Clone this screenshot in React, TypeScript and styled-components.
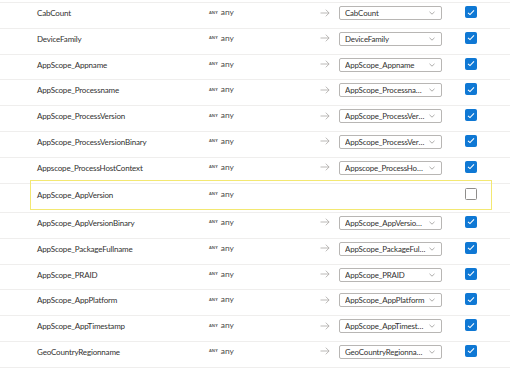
import React from 'react';
import styled, { createGlobalStyle } from 'styled-components';

interface FieldMapping {
  name: string;
  type: string;
  target: string | null;
  selected: boolean;
  focused?: boolean;
}

const GlobalStyle = createGlobalStyle`
  html, body {
    margin: 0;
    padding: 0;
    background: #ffffff;
  }
  body {
    font-family: Lato, "Noto Sans", sans-serif;
    -webkit-font-smoothing: antialiased;
  }
`;

const Page = styled.div`
  padding-top: 2px;
  width: 523px;
  height: 369px;
  overflow: hidden;
  box-sizing: border-box;
`;

const Table = styled.div`
  width: 510px;
  border-top: 1px solid #efeeed;
`;

const Row = styled.div<{ $tall?: boolean }>`
  display: flex;
  align-items: flex-start;
  height: ${p => (p.$tall ? '28.4px' : '24.8px')};
  border-bottom: 1px solid #efeeed;
`;

const RowInner = styled.div<{ $focused?: boolean }>`
  display: flex;
  align-items: center;
  box-sizing: border-box;
  margin-left: 30px;
  width: 462px;
  height: ${p => (p.$focused ? '30px' : '20px')};
  margin-top: ${p => (p.$focused ? '-4px' : '0')};
  border: ${p => (p.$focused ? '1px solid #f3e872' : 'none')};
  padding-left: ${p => (p.$focused ? '6px' : '7px')};
`;

const NameCell = styled.div`
  width: 172px;
  flex-shrink: 0;
  font-size: 8px;
  letter-spacing: -0.17px;
  color: #323130;
  white-space: nowrap;
`;

const TypeCell = styled.div`
  width: 111px;
  flex-shrink: 0;
  display: flex;
  align-items: center;
  gap: 3px;
  margin-top: -2px;
`;

const TypeBadge = styled.span`
  font-family: "Noto Sans", sans-serif;
  font-size: 4px;
  font-weight: 700;
  color: #605e5c;
  letter-spacing: 0.1px;
`;

const TypeText = styled.span`
  font-size: 8.4px;
  color: #4a4948;
`;

const ArrowCell = styled.div`
  width: 19px;
  flex-shrink: 0;
  display: flex;
  align-items: center;
  margin-top: -1px;
`;

const Dropdown = styled.div`
  width: 103px;
  height: 14px;
  flex-shrink: 0;
  box-sizing: border-box;
  border: 1px solid #b8b6b4;
  border-radius: 2px;
  display: flex;
  align-items: center;
  padding: 0 6px 0 5px;
  gap: 3px;
  background: #fff;
`;

const DropdownText = styled.span`
  flex: 1;
  min-width: 0;
  font-size: 7.9px;
  letter-spacing: -0.16px;
  color: #323130;
  white-space: nowrap;
  overflow: hidden;
  text-overflow: ellipsis;
`;

const DropdownSpacer = styled.div`
  width: 103px;
  flex-shrink: 0;
`;

const CheckCell = styled.div`
  margin-left: 23px;
  display: flex;
  align-items: center;
  margin-bottom: 2px;
`;

const Checkbox = styled.div<{ $checked: boolean }>`
  width: 12px;
  height: 12px;
  box-sizing: border-box;
  border-radius: 1.5px;
  display: flex;
  align-items: center;
  justify-content: center;
  background: ${p => (p.$checked ? '#0f78d4' : '#ffffff')};
  border: 1px solid ${p => (p.$checked ? '#0f78d4' : '#8f8d8b')};
`;

const rows: FieldMapping[] = [
  { name: 'CabCount', type: 'any', target: 'CabCount', selected: true },
  { name: 'DeviceFamily', type: 'any', target: 'DeviceFamily', selected: true },
  { name: 'AppScope_Appname', type: 'any', target: 'AppScope_Appname', selected: true },
  { name: 'AppScope_Processname', type: 'any', target: 'AppScope_Processname', selected: true },
  { name: 'AppScope_ProcessVersion', type: 'any', target: 'AppScope_ProcessVersion', selected: true },
  { name: 'AppScope_ProcessVersionBinary', type: 'any', target: 'AppScope_ProcessVersionBinary', selected: true },
  { name: 'Appscope_ProcessHostContext', type: 'any', target: 'Appscope_ProcessHostContext', selected: true },
  { name: 'AppScope_AppVersion', type: 'any', target: null, selected: false, focused: true },
  { name: 'AppScope_AppVersionBinary', type: 'any', target: 'AppScope_AppVersionBinary', selected: true },
  { name: 'AppScope_PackageFullname', type: 'any', target: 'AppScope_PackageFullname', selected: true },
  { name: 'AppScope_PRAID', type: 'any', target: 'AppScope_PRAID', selected: true },
  { name: 'AppScope_AppPlatform', type: 'any', target: 'AppScope_AppPlatform', selected: true },
  { name: 'AppScope_AppTimestamp', type: 'any', target: 'AppScope_AppTimestamp', selected: true },
  { name: 'GeoCountryRegionname', type: 'any', target: 'GeoCountryRegionname', selected: true },
];

const Arrow = () => (
  <svg width="10" height="8" viewBox="0 0 10 8" fill="none">
    <path d="M0.5 4h8.6M5.8 0.7L9.1 4 5.8 7.3" stroke="#a9a7a5" strokeWidth="0.8" />
  </svg>
);

const Chevron = () => (
  <svg width="6" height="4" viewBox="0 0 6 4" fill="none">
    <path d="M0.5 0.8L3 3.2 5.5 0.8" stroke="#8a8886" strokeWidth="0.7" />
  </svg>
);

const CheckMark = () => (
  <svg width="8" height="7" viewBox="0 0 8 7" fill="none">
    <path d="M1 3.8L3 5.6 7 1.4" stroke="#ffffff" strokeWidth="1.1" />
  </svg>
);

const App: React.FC = () => {
  return (
    <Page>
      <GlobalStyle />
      <Table>
        {rows.map(row => (
          <Row key={row.name} $tall={row.focused}>
            <RowInner $focused={row.focused}>
              <NameCell>{row.name}</NameCell>
              <TypeCell>
                <TypeBadge>ANY</TypeBadge>
                <TypeText>{row.type}</TypeText>
              </TypeCell>
              {row.target ? (
                <>
                  <ArrowCell>
                    <Arrow />
                  </ArrowCell>
                  <Dropdown>
                    <DropdownText>{row.target}</DropdownText>
                    <Chevron />
                  </Dropdown>
                </>
              ) : (
                <>
                  <ArrowCell />
                  <DropdownSpacer />
                </>
              )}
              <CheckCell>
                <Checkbox $checked={row.selected}>{row.selected && <CheckMark />}</Checkbox>
              </CheckCell>
            </RowInner>
          </Row>
        ))}
      </Table>
    </Page>
  );
};

export default App;
